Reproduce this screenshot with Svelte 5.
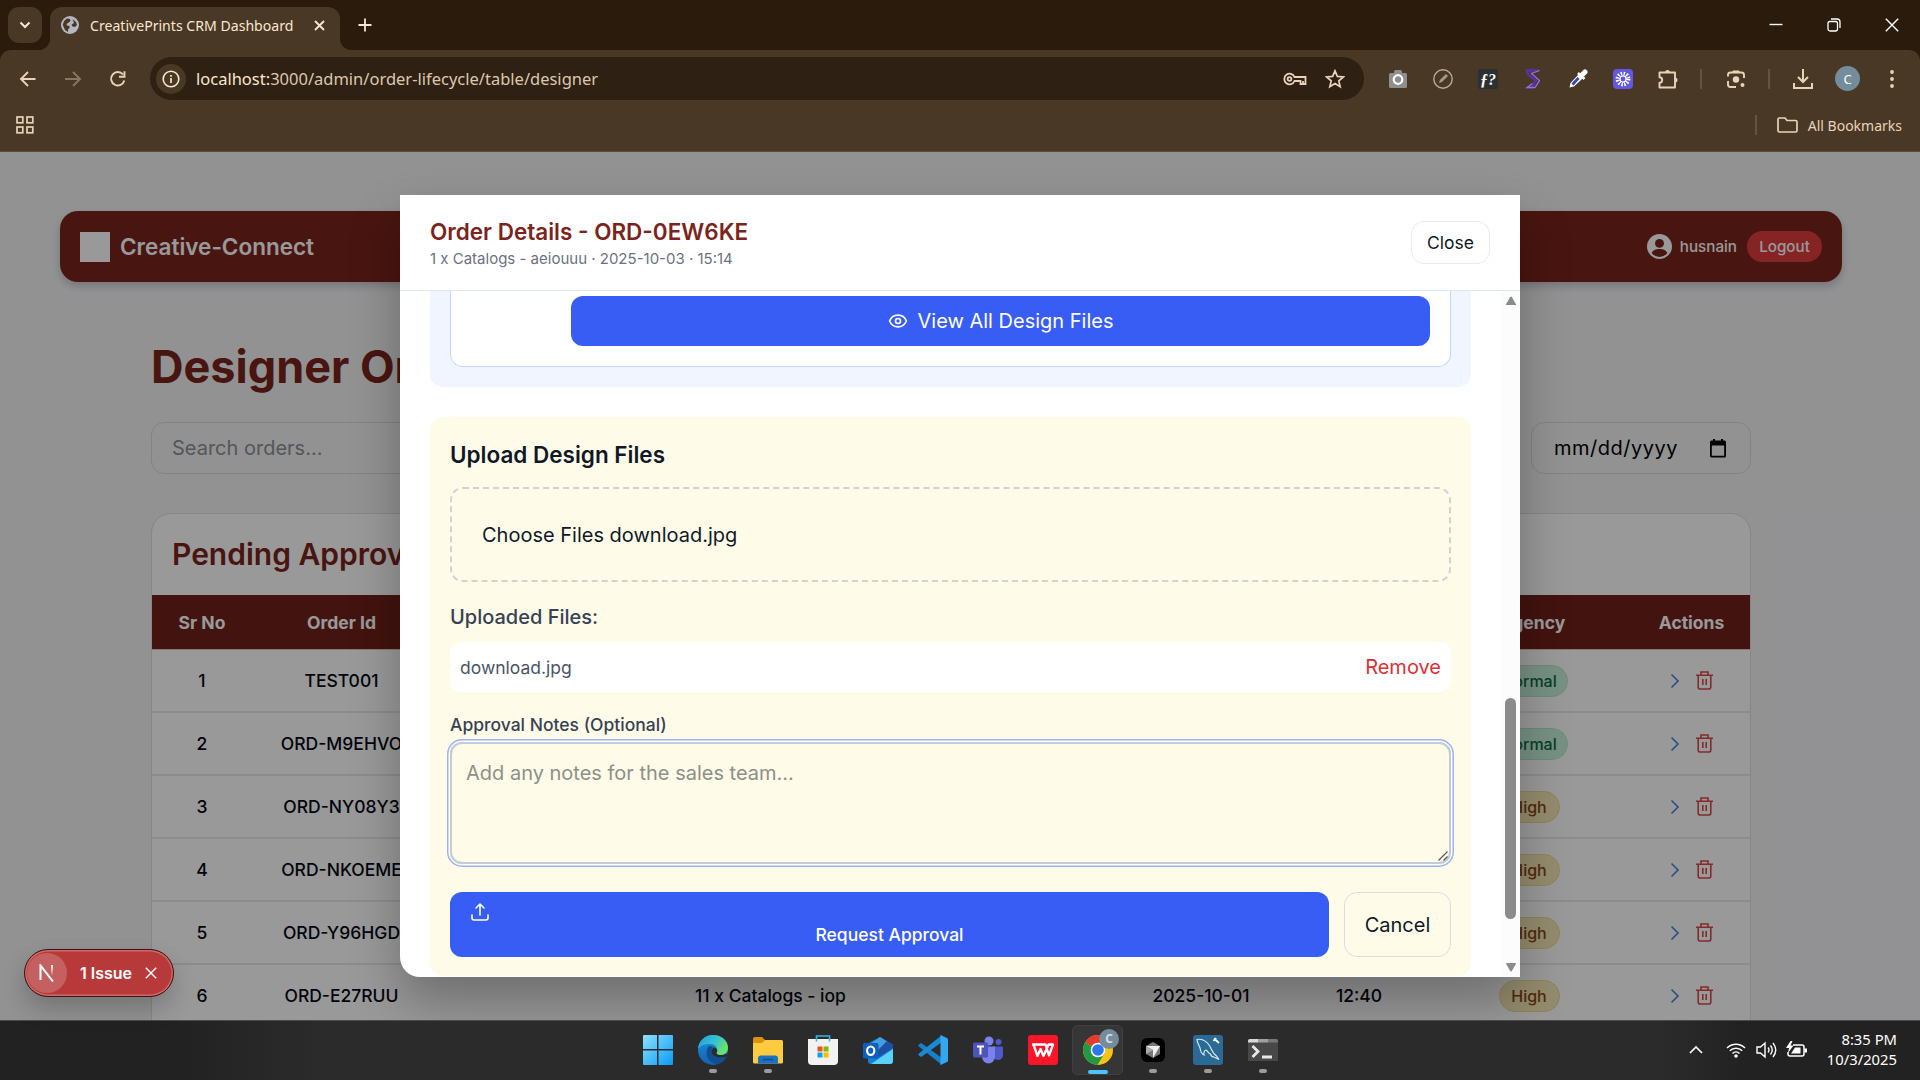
<script>
  const rows = [
    { n: 1, id: 'TEST001', product: '', date: '', time: '', urgency: 'Normal' },
    { n: 2, id: 'ORD-M9EHVO', product: '', date: '', time: '', urgency: 'Normal' },
    { n: 3, id: 'ORD-NY08Y3', product: '', date: '', time: '', urgency: 'High' },
    { n: 4, id: 'ORD-NKOEME', product: '', date: '', time: '', urgency: 'High' },
    { n: 5, id: 'ORD-Y96HGD', product: '', date: '', time: '', urgency: 'High' },
    { n: 6, id: 'ORD-E27RUU', product: '11 x Catalogs - iop', date: '2025-10-01', time: '12:40', urgency: 'High' }
  ];
</script>

<div class="screen">
  <header class="browser">
    <div class="tabstrip">
      <button class="tabsearch" aria-label="Search tabs"><svg width="12" height="8" viewBox="0 0 12 8"><path d="M1.5 1.5 6 6l4.500-4.500" fill="none" stroke="#fbe6d0" stroke-width="2" /></svg></button>
      <div class="tab">
        <svg class="globe" width="18" height="18" viewBox="0 0 18 18"><circle cx="9" cy="9" r="9" fill="#b3b8bf" /><path d="M3 5 6 2.500 9 3 9.500 5 7 7 5.500 8 6 9.500 8.500 10 8.500 12 7 13.500 7 16 4 14 1.800 9zM11.500 3 15 6 16 9 14 11 11.500 10.500 10.500 8.500 13 7z" fill="#483825" /></svg>
        <span class="tabtitle">CreativePrints CRM Dashboard</span>
        <svg width="11" height="11" viewBox="0 0 11 11"><path d="M1 1l9 9M10 1l-9 9" stroke="#fbe6d0" stroke-width="1.800" /></svg>
      </div>
      <svg class="newtab" width="14" height="14" viewBox="0 0 14 14"><path d="M7 .5v13M.5 7h13" stroke="#fbe6d0" stroke-width="1.800" /></svg>
      <div class="winctl">
        <svg width="14" height="14" viewBox="0 0 14 14"><path d="M.5 6.500h13" stroke="#fff" stroke-width="1.400" /></svg>
        <svg width="14" height="14" viewBox="0 0 14 14"><g fill="none" stroke="#fff" stroke-width="1.300"><rect x="1" y="3.500" width="9.500" height="9.500" rx="2" /><path d="M4 1h6a3 3 0 0 1 3 3v6" /></g></svg>
        <svg width="14" height="14" viewBox="0 0 14 14"><path d="M.8.8l12.400 12.400M13.200.8.8 13.200" stroke="#fff" stroke-width="1.400" /></svg>
      </div>
    </div>
    <div class="toolbar">
      <div class="nav">
        <svg width="18" height="18" viewBox="0 0 18 18"><path d="M16.500 9H2M9 2 2 9l7 7" fill="none" stroke="#e8d3b9" stroke-width="1.900" /></svg>
        <svg width="18" height="18" viewBox="0 0 18 18"><path d="M1 9h15M9 2l7 7-7 7" fill="none" stroke="#88765f" stroke-width="1.900" /></svg>
        <svg width="18" height="18" viewBox="0 0 18 18"><path d="M14 4.500A6.700 6.700 0 1 0 15.300 10.500M15.500 1.200v5.500H10" fill="none" stroke="#e8d3b9" stroke-width="1.900" /></svg>
      </div>
      <div class="omnibox">
        <span class="info"><svg width="18" height="18" viewBox="0 0 18 18"><circle cx="9" cy="9" r="7.800" fill="none" stroke="#fbe6d0" stroke-width="1.600" /><path d="M9 8v5M9 5v1.700" stroke="#fbe6d0" stroke-width="1.700" /></svg></span>
        <span class="url">localhost:<i>3000/admin/order-lifecycle/table/designer</i></span>
        <svg class="key" width="24" height="14" viewBox="0 0 24 14"><g fill="none" stroke="#e8d3b9" stroke-width="1.800"><path d="M11.500 5H22.500v7H17.500V9h-6A5.300 5.300 0 1 1 11.500 5z" /><circle cx="6.500" cy="7" r="1.900" /><path d="M20 12V9" /></g></svg>
        <svg width="20" height="20" viewBox="0 0 20 20"><path d="M10 1.800l2.400 5.600 6 .5-4.600 4 1.400 5.900-5.200-3.200-5.200 3.200 1.400-5.900-4.600-4 6-.5z" fill="none" stroke="#e8d3b9" stroke-width="1.700" /></svg>
      </div>
      <div class="exts">
        <svg viewBox="0 0 20 20"><path d="M1 5.500q0-1.500 1.500-1.500H6V2.500Q6 1 7.500 1h5Q14 1 14 2.500V4h3.500Q19 4 19 5.500v12q0 1.500-1.500 1.500h-15Q1 19 1 17.500z" fill="#8f8f8f" /><circle cx="10" cy="10.500" r="4.300" fill="#8c8c8c" stroke="#fff" stroke-width="2.200" /></svg>
        <svg viewBox="0 0 20 20"><circle cx="10" cy="10" r="9.200" fill="none" stroke="#b5aa9c" stroke-width="1.400" /><path d="M6 14l.8-3L13 5l2 2-6 6z" fill="#a0978c" /></svg>
        <svg viewBox="0 0 20 20"><rect width="20" height="20" rx="2" fill="#2d3033" /><text x="10" y="15.500" text-anchor="middle" class="fq">ƒ?</text></svg>
        <svg viewBox="0 0 20 20"><path d="M16 1.500H4l1 4 8 6-4 7H4" fill="none" stroke="#5b2fa8" stroke-width="2.600" /><path d="M16.500 1.500 8.500 4.500l8 7-4.500 7H4l5.500-4" fill="none" stroke="#9670d8" stroke-width="1.300" /></svg>
        <svg viewBox="0 0 20 20"><path d="M1.500 18.500 2.500 14l8-8.500 4 4-8.500 8z" fill="#fff" /><path d="M4.500 15.500l6-6.500" stroke="#3446b5" stroke-width="2.800" /><path d="M10 4l6.500 6" stroke="#fff" stroke-width="2.600" /><path d="M14 6l3-3" stroke="#fff" stroke-width="5" stroke-linecap="round" /></svg>
        <svg viewBox="0 0 20 20"><rect width="20" height="20" rx="4" fill="#6258e0" /><circle cx="10" cy="10" r="5.200" fill="none" stroke="#fff" stroke-width="4.400" stroke-dasharray="1.350 1.370" /><circle cx="10" cy="10" r="3" fill="#6258e0" stroke="#fff" stroke-width="1.200" /></svg>
        <svg viewBox="0 0 20 20"><path d="M1.500 3.500h15.500v15h-15.500v-4.800a2.700 2.700 0 0 0 0-5.400z" fill="none" stroke="#e8d3b9" stroke-width="1.900" stroke-linejoin="round" /><path d="M7 3.500a2.500 2.500 0 0 1 5 0zM17 8.500a2.500 2.500 0 0 1 0 5z" fill="#e8d3b9" /></svg>
      </div>
      <span class="vsep"></span>
      <svg class="lens" width="20" height="20" viewBox="0 0 20 20"><g fill="none" stroke="#e8d3b9" stroke-width="1.900"><path d="M2 7.500V6a2.500 2.500 0 0 1 2.500-2.500h11A2.500 2.500 0 0 1 18 6v3M2 12v3.500A2.500 2.500 0 0 0 4.500 18H10" /></g><path d="M6 3.500 7 1.500h6l1 2z" fill="#e8d3b9" /><circle cx="10" cy="10.500" r="3.200" fill="#e8d3b9" /><circle cx="16.500" cy="16" r="2" fill="#e8d3b9" /></svg>
      <span class="vsep"></span>
      <svg class="dl" width="20" height="20" viewBox="0 0 20 20"><path d="M10 0v13M5 8l5 5 5-5M1 14v5h18v-5" fill="none" stroke="#e8d3b9" stroke-width="2" /></svg>
      <span class="avatar">C</span>
      <svg class="dots" width="4" height="18" viewBox="0 0 4 18"><g fill="#e8d3b9"><circle cx="2" cy="2" r="1.900" /><circle cx="2" cy="9" r="1.900" /><circle cx="2" cy="16" r="1.900" /></g></svg>
    </div>
    <div class="bookmarks">
      <svg width="18" height="18" viewBox="0 0 18 18"><g fill="none" stroke="#e8d3b9" stroke-width="1.700"><rect x="1" y="1" width="5.800" height="5.800" /><rect x="11" y="1" width="5.800" height="5.800" /><rect x="1" y="11" width="5.800" height="5.800" /><rect x="11" y="11" width="5.800" height="5.800" /></g></svg>
      <div class="allbm">
        <span class="vsep"></span>
        <svg width="21" height="16" viewBox="0 0 21 16"><path d="M1 13.500V2.500A1.500 1.500 0 0 1 2.500 1H8l2 2.500h8.500A1.500 1.500 0 0 1 20 5v8.500a1.500 1.500 0 0 1-1.500 1.500h-16A1.500 1.500 0 0 1 1 13.500z" fill="none" stroke="#e8d3b9" stroke-width="1.700" /></svg>
        <span>All Bookmarks</span>
      </div>
    </div>
  </header>

  <main class="page">
    <nav class="appbar">
      <span class="logo"></span>
      <span class="brand">Creative-Connect</span>
      <svg class="user" width="25" height="25" viewBox="0 0 24 24"><circle cx="12" cy="12" r="12" fill="#fff" /><circle cx="12" cy="9" r="4.300" fill="#7b241c" /><path d="M4.500 18.500c1-3 4-4 7.500-4s6.500 1 7.500 4A10 10 0 0 1 12 22a10 10 0 0 1-7.500-3.500z" fill="#7b241c" /></svg>
      <span class="uname">husnain</span>
      <button class="logout">Logout</button>
    </nav>
    <h1>Designer Orders</h1>
    <div class="filters">
      <div class="search">Search orders...</div>
      <div class="datebox">
        <span>mm/dd/yyyy</span>
        <svg width="16" height="19" viewBox="0 0 16 19"><path d="M0 3a1.500 1.500 0 0 1 1.500-1.500H3V0h2v1.500h6V0h2v1.500h1.500A1.500 1.500 0 0 1 16 3v14a1.500 1.500 0 0 1-1.500 1.500h-13A1.500 1.500 0 0 1 0 17zM1.800 6.500v10.200h12.400V6.500z" fill="#000" fill-rule="evenodd" /></svg>
      </div>
    </div>
    <section class="card">
      <h2>Pending Approval</h2>
      <div class="row head"><span>Sr No</span><span>Order Id</span><span></span><span></span><span></span><span>Urgency</span><span>Actions</span></div>
      {#each rows as r}
        <div class="row">
          <span>{r.n}</span><span>{r.id}</span><span>{r.product}</span><span>{r.date}</span><span>{r.time}</span>
          <span><b class="pill" class:high={r.urgency === 'High'}>{r.urgency}</b></span>
          <span class="acts">
            <svg width="10" height="16" viewBox="0 0 10 16"><path d="M1.500 1.500 8 8l-6.500 6.500" fill="none" stroke="#4a86dc" stroke-width="1.700" /></svg>
            <svg width="17" height="19" viewBox="0 0 17 19"><g fill="none" stroke="#dc4848" stroke-width="1.600"><path d="M0 4.300h17M5 4V1h7v3M2.200 4.500V16A1.800 1.800 0 0 0 4 18h9a1.800 1.800 0 0 0 1.800-2V4.500M6.800 8v6M10.200 8v6" /></g></svg>
          </span>
        </div>
      {/each}
    </section>
  </main>

  <div class="backdrop">
    <div class="modal">
      <div class="mhead">
        <div class="mtitle">
          <h3>Order Details - ORD-0EW6KE</h3>
          <p>1 x Catalogs - aeiouuu · 2025-10-03 · 15:14</p>
        </div>
        <button class="close">Close</button>
      </div>
      <div class="mbody">
        <div class="content">
          <div class="bluesec"><div class="bluein">
            <button class="view">
              <svg width="20" height="20" viewBox="0 0 24 24" fill="none" stroke="#fff" stroke-width="2"><path d="M2.062 12.348a1 1 0 0 1 0-.696 10.750 10.750 0 0 1 19.876 0 1 1 0 0 1 0 .696 10.750 10.750 0 0 1-19.876 0" /><circle cx="12" cy="12" r="3" /></svg>
              View All Design Files
            </button>
          </div></div>
          <div class="upload">
            <h4>Upload Design Files</h4>
            <div class="drop">Choose Files download.jpg</div>
            <div class="ulabel">Uploaded Files:</div>
            <div class="file"><span>download.jpg</span><button>Remove</button></div>
            <div class="nlabel">Approval Notes (Optional)</div>
            <div class="notes">
              Add any notes for the sales team...
              <svg class="grip" width="10" height="10" viewBox="0 0 10 10"><path d="M.5 9.500l9-9M5.500 9.500l4-4" stroke="#555" stroke-width="1.200" /></svg>
            </div>
            <div class="btns">
              <button class="request">
                <svg width="18" height="18" viewBox="0 0 18 18" fill="none" stroke="#fff" stroke-width="1.600" stroke-linecap="round" stroke-linejoin="round"><path d="M9 12V1.500M5 5l4-4 4 4M1 12v3a2 2 0 0 0 2 2h12a2 2 0 0 0 2-2v-3" /></svg>
                <span>Request Approval</span>
              </button>
              <button class="cancel">Cancel</button>
            </div>
          </div>
        </div>
        <div class="sbar">
          <svg width="12" height="10" viewBox="0 0 12 10"><path d="M5 1.200 1 8.200Q.8 9 1.600 9h8.800q.8 0 .6-.8L7 1.200Q6-.2 5 1.200z" fill="#8b8b8b" /></svg>
          <span class="thumb"></span>
          <svg width="12" height="10" viewBox="0 0 12 10"><path d="M5 8.800 1 1.800Q.8 1 1.600 1h8.800q.8 0 .6.800L7 8.800Q6 10.200 5 8.800z" fill="#8b8b8b" /></svg>
        </div>
      </div>
    </div>
  </div>

  <div class="issue">
    <span class="nlogo"><svg width="16" height="18" viewBox="0 0 16 18"><defs><linearGradient id="nstem" x2="0" y2="1"><stop stop-color="#fff" /><stop offset="1" stop-color="#fff" stop-opacity="0" /></linearGradient></defs><path d="M1.500 16V1.500L14 17.500" fill="none" stroke="#fff" stroke-width="2" /><path d="M12 1h2v11h-2z" fill="url(#nstem)" /></svg></span>
    <span>1 Issue</span>
    <svg width="12" height="12" viewBox="0 0 12 12"><path d="M.8.8l10.400 10.400M11.200.8.8 11.200" stroke="#fff" stroke-width="1.400" /></svg>
  </div>

  <footer class="taskbar">
    <div class="apps">
      <div class="app"><svg viewBox="0 0 30 30"><defs><linearGradient id="win" x2="1" y2="1"><stop stop-color="#8ce0ff" /><stop offset="1" stop-color="#0a9bf5" /></linearGradient></defs><path d="M0 1a1 1 0 0 1 1-1h13v14H0zM15.500 0H29a1 1 0 0 1 1 1v13H15.500zM0 15.500h14V30H1a1 1 0 0 1-1-1zM15.500 15.500H30V29a1 1 0 0 1-1 1H15.500z" fill="url(#win)" /></svg></div>
      <div class="app run"><svg viewBox="0 0 30 30"><defs><linearGradient id="eg" x2="1" y2=".5"><stop stop-color="#1b9de2" /><stop offset=".55" stop-color="#35c1d0" /><stop offset="1" stop-color="#6be36a" /></linearGradient><linearGradient id="eb" x2="0" y2="1"><stop stop-color="#1c93dd" /><stop offset="1" stop-color="#1560ae" /></linearGradient></defs><circle cx="15" cy="15" r="15" fill="url(#eb)" /><path d="M0 15C0 6 7 0 15 0c9 0 15 6 15 12.500 0 5-3.500 7.500-7.500 7.500-4 0-5-1.500-4-3 2-3-.5-8-6-8C6 9 1 11 0 15z" fill="url(#eg)" /><path d="M10 12c-4 8 1 17 10 17 4-1 7-4 8.500-7.500-8 3.500-15-1-14.500-6.500 0-2 1-3 1-3s-3-2-5 0z" fill="#10508f" /><path d="M16 12.500c-1.800 1-2.300 2.500-2.300 4 0 4 5.300 6.500 11.300 6 2-.3 3-.8 4-1.500l1-3.500c-2 2-4.500 2.500-7 2.500-4.500 0-5-1.500-4-3 .8-1.500 0-4-3-4.500z" fill="#2b2b2b" /></svg></div>
      <div class="app run"><svg viewBox="0 0 30 30"><path d="M0 4a2 2 0 0 1 2-2h7l3 3v5H0z" fill="#d99311" /><path d="M0 8h9l3-3h16.500A1.500 1.500 0 0 1 30 6.500V27a1.500 1.500 0 0 1-1.500 1.500h-27A1.500 1.500 0 0 1 0 27z" fill="#fccb3f" /><path d="M5 28.500v-5a3 3 0 0 1 3-3h14a3 3 0 0 1 3 3v5z" fill="#1673c4" /><path d="M10 24.500h10" stroke="#0d4f95" stroke-width="1.600" /></svg></div>
      <div class="app"><svg viewBox="0 0 30 30"><path d="M0 4h30v22a4 4 0 0 1-4 4H4a4 4 0 0 1-4-4z" fill="#f2f2f2" /><path d="M8.500 6.500V1h13v5.500" fill="none" stroke="#35b5e8" stroke-width="1.600" /><path d="M9.500 11.500h5v5h-5z" fill="#f25022" /><path d="M15.500 11.500h5v5h-5z" fill="#7fba00" /><path d="M9.500 17.500h5v5h-5z" fill="#00a4ef" /><path d="M15.500 17.500h5v5h-5z" fill="#ffb900" /></svg></div>
      <div class="app"><svg viewBox="0 0 30 30"><path d="M4 9 17 2l13 8v16a3 3 0 0 1-3 3H8a3 3 0 0 1-3-3z" fill="#1580cf" /><path d="M17 2l13 8-13 9-11-9z" fill="#3f9fe0" /><path d="M24 6l6 4v3L16 22l-4-4z" fill="#1d4fa3" /><path d="M30 14v12a3 3 0 0 1-3 3H8z" fill="#58d2f8" /><rect y="8" width="15.500" height="15.500" rx="1.500" fill="#0f5fc0" /><ellipse cx="7.700" cy="15.700" rx="3.600" ry="4.200" fill="none" stroke="#fff" stroke-width="2.200" /></svg></div>
      <div class="app"><svg viewBox="0 0 30 30"><path d="M1 9.500 3.200 8 24 23v7L.8 11.500Q0 10.500 1 9.500z" fill="#1780c8" /><path d="M1 20.500 3.200 22 24 7V0L.8 18.500Q0 19.500 1 20.500z" fill="#1a8ad4" /><path d="M22.500 0l6.500 3q1 .5 1 1.500v21q0 1-1 1.500l-6.500 3z" fill="#35a7f2" /></svg></div>
      <div class="app"><svg viewBox="0 0 30 30"><circle cx="16" cy="6" r="4.500" fill="#7b83eb" /><circle cx="25.500" cy="7" r="3" fill="#5059c9" /><path d="M20 11.500h9a1 1 0 0 1 1 1V20a5 5 0 0 1-9 3z" fill="#5059c9" /><path d="M9 11.500h13V22a6.500 6.500 0 0 1-13 0z" fill="#7b83eb" /><rect y="7.500" width="15" height="15" rx="1.500" fill="#4b53bc" /><path d="M4 11.500h7M7.500 11.500v8" stroke="#fff" stroke-width="2" /></svg></div>
      <div class="app"><svg viewBox="0 0 30 30"><rect width="30" height="30" rx="3" fill="#fa1528" /><path d="M4 9.500h13.500L21 20.500l4-11h-4.500L15.500 21l-3-7-3 7L5.500 9.500" fill="none" stroke="#fff" stroke-width="2.300" stroke-linejoin="round" /></svg></div>
      <div class="app active"><svg viewBox="0 0 30 30"><circle cx="15" cy="15" r="15" fill="#fbc116" /><path d="M15 15 2 7.500A15 15 0 0 1 28 7.500z" fill="#e33b2e" /><path d="M15 15 2 7.500A15 15 0 0 0 14.500 30L21.500 18.500z" fill="#229a44" /><circle cx="15" cy="15" r="7.300" fill="#fff" /><circle cx="15" cy="15" r="5.800" fill="#2a78ee" /></svg><em>C</em></div>
      <div class="app run"><svg viewBox="0 0 30 30"><rect x="3" y="3" width="24" height="24" rx="6" fill="#000" /><path d="M15 7l7 4v8l-7 4-7-4v-8z" fill="#777" /><path d="M8 11h14l-7 12v-8z" fill="#eee" /><path d="M8 11v8l7-4z" fill="#aaa" /></svg></div>
      <div class="app run"><svg viewBox="0 0 30 30"><rect width="30" height="30" rx="3" fill="#2b6a94" /><path d="M4 4.500c5-1 10 2 13 7 2 4 3 7 6 9l3 4-5-2.500c-2 0-3-1-3.500-3-2-.5-2.500-3-4.500-4-2 0-2.500 4-2 5-3-1-3.500-4-4-7C6 10 4 8 4 4.500z" fill="none" stroke="#d8e8f2" stroke-width="1.200" /><path d="M21 3.500l5 4.500M20.500 6l2.500-3" stroke="#fff" stroke-width="1.800" /></svg></div>
      <div class="app run"><svg viewBox="0 0 30 30"><path d="M0 6a2 2 0 0 1 2-2h26a2 2 0 0 1 2 2v20H0z" fill="#484848" /><path d="M0 7.500V6a2 2 0 0 1 2-2h8v3.500z" fill="#d8d8d8" /><path d="M10 4h10v3.500H10z" fill="#a0a0a0" /><path d="M20 4h8a2 2 0 0 1 2 2v1.500H20z" fill="#777" /><path d="M4.500 11l5.500 5.500L4.500 22M14 22h10" fill="none" stroke="#e8e8e8" stroke-width="2.800" /></svg></div>
    </div>
    <div class="tray">
      <svg width="14" height="9" viewBox="0 0 14 9"><path d="M1 8l6-6 6 6" fill="none" stroke="#fff" stroke-width="1.700" /></svg>
      <svg class="wifi" width="20" height="16" viewBox="0 0 20 16"><g fill="none" stroke="#fff" stroke-width="1.500"><path d="M1 6a12.500 12.500 0 0 1 18 0M3.800 8.800a8.800 8.800 0 0 1 12.400 0M6.500 11.500a5 5 0 0 1 7 0" /></g><circle cx="10" cy="14" r="1.800" fill="#fff" /></svg>
      <svg class="vol" width="21" height="18" viewBox="0 0 21 18"><g fill="none" stroke="#fff" stroke-width="1.400"><path d="M1 6v6h3.500L9 16V2L4.500 6zM12 6.500q2 2.500 0 5M14.500 4.500q3.500 4.500 0 9M17 2q5.500 7 0 14" /></g></svg>
      <svg class="bat" width="21" height="18" viewBox="0 0 21 18"><path d="M7 4h9a2 2 0 0 1 2 2v7a2 2 0 0 1-2 2H4a2 2 0 0 1-2-2v-2" fill="none" stroke="#fff" stroke-width="1.500" /><path d="M18.500 7.500H21v4h-2.500zM9 6.500h5.500v6H5zM4.500 0 0 7h3l-1 5 5.500-7.500H4.500L6.500 0z" fill="#fff" /></svg>
      <div class="clock"><span>8:35 PM</span><span>10/3/2025</span></div>
    </div>
  </footer>
</div>

<style>
  :global(body) { margin: 0; overflow: hidden; }
  .screen, .screen :global(*) { box-sizing: border-box; }
  .screen { position: relative; width: 1920px; height: 1080px; overflow: hidden; display: flex; flex-direction: column; font-family: Inter, sans-serif; color: #101828; }
  svg { display: block; flex: none; }
  button { font: inherit; border: 0; background: none; padding: 0; margin: 0; color: inherit; }
  h1, h2, h3, h4, p { margin: 0; }

  .browser { height: 152px; background: linear-gradient(#2a1b0c 70px, #483825 70px); flex: none; font-family: "Noto Sans", sans-serif; color: #fbe6d0; border-bottom: 1px solid #5a4d3b; }
  .tabstrip { height: 50px; display: flex; align-items: flex-start; padding-left: 8px; }
  .tabsearch { width: 34px; height: 36px; margin-top: 7px; border-radius: 11px; background: #483825; display: flex; align-items: center; justify-content: center; }
  .tab { position: relative; margin: 7px 0 0 8px; width: 290px; height: 43px; border-radius: 12px 12px 0 0; background: #483825; display: flex; align-items: center; padding: 0 15px 7px 11px; }
  .tab::before, .tab::after { content: ""; position: absolute; bottom: 0; width: 12px; height: 12px; }
  .tab::before { left: -12px; background: radial-gradient(circle at 0 0, transparent 12px, #483825 12.5px); }
  .tab::after { right: -12px; background: radial-gradient(circle at 100% 0, transparent 12px, #483825 12.5px); }
  .tabtitle { flex: 1; margin-left: 11px; font-size: 14.1px; white-space: nowrap; }
  .newtab { margin: 18px 0 0 18px; }
  .winctl { margin-left: auto; display: flex; gap: 44px; padding: 18px 21px 0 0; }
  .toolbar { height: 57px; display: flex; align-items: center; background: #483825; border-radius: 11px 11px 0 0; }
  .nav { width: 150px; display: flex; gap: 27px; padding-left: 19px; }
  .omnibox { width: 1214px; height: 43px; border-radius: 22px; background: #2e2012; display: flex; align-items: center; padding: 0 19px 0 6px; }
  .info { width: 30px; height: 30px; border-radius: 50%; background: #483825; display: flex; align-items: center; justify-content: center; }
  .url { flex: 1; margin-left: 10px; font-size: 16.5px; }
  .url i { font-style: normal; color: #dcc8ae; }
  .key { margin-right: 18px; }
  .exts { display: flex; gap: 25px; margin-left: 24px; }
  .exts svg { width: 20px; height: 20px; }
  .fq { font: italic bold 16px "Liberation Serif", serif; fill: #fff; }
  .vsep { width: 2px; height: 20px; background: #65543d; flex: none; }
  .toolbar .vsep { margin-left: 22px; }
  .lens { margin-left: 24px; }
  .dl { margin-left: 23px; }
  .avatar { width: 25px; height: 25px; border-radius: 50%; background: #748c9c; margin-left: 22px; font-size: 13px; color: #fff; display: flex; align-items: center; justify-content: center; }
  .dots { margin-left: 30px; }
  .bookmarks { height: 36px; display: flex; align-items: center; padding: 0 18px 0 16px; justify-content: space-between; }
  .allbm { display: flex; align-items: center; font-size: 14px; color: #e8d3b9; }
  .allbm svg { margin: 0 10px 0 20px; }

  .page { flex: 1; min-height: 0; overflow: hidden; background: #f3f4f6; padding: 59px 78px 0 60px; }
  .appbar { height: 71px; border-radius: 18px; background: #7b241c; box-shadow: 0 4px 8px rgba(0,0,0,.2); display: flex; align-items: center; padding: 0 20px; color: #fff; }
  .logo { width: 30px; height: 30px; background: #fff; }
  .brand { font-weight: 600; font-size: 22.5px; margin-left: 10px; flex: 1; }
  .uname { font-size: 15.2px; font-weight: 500; margin: 0 10px 0 8px; }
  .logout { width: 75px; height: 31px; border-radius: 16px; background: #e03c3e; font-size: 15.2px; font-weight: 500; }
  h1 { margin: 57px 0 0 91px; font-size: 45px; line-height: 56px; font-weight: 700; color: #7b241c; }
  .filters { display: flex; justify-content: space-between; margin: 27px 91px 0 91px; }
  .search, .datebox { height: 52px; border: 1.500px solid #d9dbe0; border-radius: 13px; display: flex; align-items: center; font-size: 20px; }
  .search { width: 700px; padding-left: 20px; color: #8d8f94; }
  .datebox { width: 220px; padding: 0 24px 0 22px; justify-content: space-between; color: #000; letter-spacing: .5px; }
  .card { margin: 39px 91px 0 91px; height: 700px; border: 1.500px solid #dddfe3; border-radius: 20px; background: #fff; overflow: hidden; }
  h2 { height: 81px; line-height: 80px; padding-left: 20px; font-size: 30px; font-weight: 600; color: #7b241c; }
  .row { height: 63px; display: grid; grid-template-columns: 100px 179px 679px 182px 134px 206px 119px; align-items: center; text-align: center; font-size: 17.5px; font-weight: 500; border-bottom: 2px solid #e8e9ec; color: #030712; white-space: nowrap; }
  .head { height: 55px; background: #6e211a; color: #fff; font-weight: 700; border-bottom: 1px solid #e4c8c4; }
  .pill { display: inline-flex; align-items: center; justify-content: center; width: 78px; height: 32px; border-radius: 16px; background: #c9f2dc; border: 1px solid #b4e8cd; color: #0b6b43; font-weight: 500; font-size: 16px; }
  .high { width: 61px; background: #f7eab8; border-color: #ecdc97; color: #8a4510; }
  .acts { display: flex; gap: 16px; justify-content: center; align-items: center; }

  .backdrop { position: absolute; left: 0; top: 152px; width: 1920px; height: 868px; background: rgba(0,0,0,.4); padding: 43px 400px; overflow: hidden; }
  .modal { height: 782px; background: #fff; border-radius: 0 0 0 20px; box-shadow: 0 25px 50px rgba(0,0,0,.28); overflow: hidden; display: flex; flex-direction: column; }
  .mhead { height: 96px; border-bottom: 1px solid #dfe5ee; padding: 0 30px; display: flex; justify-content: space-between; align-items: center; flex: none; }
  .mtitle { padding-top: 3px; }
  h3 { font-size: 22.5px; line-height: 28px; font-weight: 600; color: #7b241c; }
  .mhead p { font-size: 15px; line-height: 22px; margin-top: 2px; color: #6a7282; }
  .close { width: 79px; height: 43px; border: 1.500px solid #e8eaee; border-radius: 13px; font-size: 17.5px; }
  .mbody { flex: 1; min-height: 0; display: flex; }
  .content { width: 1101px; padding: 0 30px; }
  .bluesec { height: 96px; background: #f0f5ff; border-radius: 0 0 13px 13px; padding: 0 20px; }
  .bluein { height: 76px; background: #fff; border: 1px solid #c5d8fb; border-top: 0; border-radius: 0 0 13px 13px; padding: 5px 19px 0 120px; }
  .view { width: 859px; height: 50px; background: #385df5; color: #fff; border-radius: 12px; font-size: 20px; display: flex; align-items: center; justify-content: center; gap: 10px; }
  .upload { margin-top: 30px; height: 559px; background: #fefce8; border-radius: 13px; padding: 20px; }
  h4 { font-size: 22.5px; line-height: 35px; font-weight: 600; }
  .drop { margin-top: 15px; height: 95px; border: 2px dashed #d2d2d0; border-radius: 13px; padding-left: 30px; display: flex; align-items: center; font-size: 20px; }
  .ulabel { margin-top: 20px; height: 30px; line-height: 30px; font-size: 20px; font-weight: 500; color: #364153; }
  .file { margin-top: 10px; height: 50px; background: #fff; border-radius: 12px; padding: 0 10px; display: flex; align-items: center; justify-content: space-between; font-size: 17.5px; color: #4a5565; }
  .file button { color: #dd2f35; font-size: 20px; }
  .nlabel { margin-top: 20px; height: 25px; line-height: 25px; font-size: 17.5px; font-weight: 500; color: #364153; }
  .notes { position: relative; margin-top: 5px; height: 122px; border: 2px solid #c3cbd8; border-radius: 12px; box-shadow: 0 0 0 1.500px #fff, 0 0 0 3px #9db3f0; padding: 13px 14px; line-height: 32px; font-size: 20px; color: #8d8f88; }
  .grip { position: absolute; right: 1px; bottom: 1px; }
  .btns { margin-top: 28px; display: flex; gap: 15px; }
  .request { width: 879px; height: 65px; background: #385df5; border-radius: 12px; color: #fff; font-size: 17.5px; font-weight: 500; padding: 11px 21px 0; display: flex; flex-direction: column; }
  .request span { align-self: center; margin-top: 3px; }
  .cancel { width: 107px; height: 65px; border: 1.500px solid #dcdde0; border-radius: 13px; font-size: 20px; }
  .sbar { width: 19px; background: #fcfcfc; display: flex; flex-direction: column; align-items: center; padding: 5px 0; }
  .thumb { width: 11px; height: 221px; border-radius: 6px; background: #8b8b8b; margin: 392px 0 auto; }

  .issue { position: absolute; left: 24px; top: 949px; width: 150px; height: 48px; border-radius: 24px; background: #b73939; border: 1.500px solid #3a1414; box-shadow: inset 0 0 0 1.500px #d06a6a, 0 12px 24px rgba(0,0,0,.2); display: flex; align-items: center; padding: 0 16px 0 2px; justify-content: space-between; color: #fff; font-size: 16px; font-weight: 600; }
  .nlogo { width: 40px; height: 40px; border-radius: 50%; background: #c46060; display: flex; align-items: center; justify-content: center; }

  .taskbar { height: 60px; flex: none; border-top: 1px solid #4a4a4a; background: linear-gradient(90deg, #222 0, #222 180px, #2b2b2b 320px, #2b2b2b 1660px, #222 1740px); display: flex; padding-left: 630px; }
  .apps { display: flex; }
  .app { position: relative; width: 55px; height: 58px; display: flex; align-items: center; justify-content: center; }
  .app svg { width: 30px; height: 30px; }
  .run::after { content: ""; position: absolute; bottom: 6px; width: 8px; height: 4px; border-radius: 2px; background: #9b9b9b; }
  .active { width: 51px; height: 50px; margin: 4px 2px; border-radius: 5px; background: #363636; border: 1px solid #404040; }
  .active::after { content: ""; position: absolute; bottom: 0; width: 20px; height: 4px; border-radius: 2px; background: #4cc2ff; }
  .active em { position: absolute; right: 3px; top: 3px; width: 20px; height: 20px; border-radius: 50%; background: #748c9c; color: #d4dde3; font: bold 12px/20px "Noto Sans", sans-serif; text-align: center; }
  .tray { margin-left: auto; display: flex; align-items: center; padding-right: 23px; height: 57px; }
  .wifi { margin-left: 23px; }
  .vol { margin-left: 10px; }
  .bat { margin-left: 9px; }
  .clock { width: 90px; display: flex; flex-direction: column; align-items: flex-end; font: 14.8px/20px "Noto Sans", sans-serif; color: #fff; padding-bottom: 1px; }
</style>
